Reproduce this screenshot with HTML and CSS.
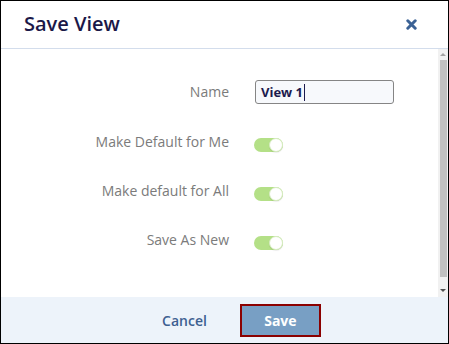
FILE: index.html
```html
<!DOCTYPE html>
<html lang="en">
<head>
    <meta charset="UTF-8">
    <meta name="viewport" content="width=device-width, initial-scale=1.0">
    <title>Save View</title>
    <link rel="stylesheet" href="styles.css">
</head>
<body>
    <div class="dialog">
        <div class="dialog-header">
            <h1 class="dialog-title">Save View</h1>
            <button class="close-btn" type="button" aria-label="Close">
                <svg width="11" height="11" viewBox="0 0 11 11">
                    <path d="M1.8 1.8 L9.2 9.2 M9.2 1.8 L1.8 9.2" stroke="#3b6295" stroke-width="3" stroke-linecap="round"/>
                </svg>
            </button>
        </div>

        <div class="dialog-body">
            <div class="form">
                <div class="field field-name">
                    <label class="field-label">Name</label>
                    <div class="text-input">View 1<span class="caret"></span></div>
                </div>
                <div class="field">
                    <label class="field-label">Make Default for Me</label>
                    <span class="toggle on"><span class="knob"></span></span>
                </div>
                <div class="field">
                    <label class="field-label">Make default for All</label>
                    <span class="toggle on"><span class="knob"></span></span>
                </div>
                <div class="field">
                    <label class="field-label">Save As New</label>
                    <span class="toggle on"><span class="knob"></span></span>
                </div>
            </div>
            <!-- fake scrollbar -->
            <div class="scrollbar">
                <span class="arrow-up"></span>
                <span class="thumb"></span>
                <span class="arrow-down"></span>
            </div>
        </div>

        <div class="dialog-footer">
            <button class="btn-link" type="button">Cancel</button>
            <button class="btn-save" type="button">Save</button>
        </div>
    </div>
</body>
</html>
```

FILE: styles.css
```css
*{
    margin: 0;
    padding: 0;
    box-sizing: border-box;
}
body{
    font-family: "Open Sans", "Liberation Sans", sans-serif;
    background-color: white;
}
.dialog{
    width: 449px;
    height: 344px;
    border: 1px solid black;
    display: flex;
    flex-direction: column;
    background-color: white;
}
.dialog-header{
    height: 48px;
    flex-shrink: 0;
    display: flex;
    align-items: center;
    padding: 0 31px 0 23px;
    border-bottom: 1px solid #d3ddec;
}
.dialog-title{
    font-size: 20px;
    font-weight: 600;
    color: #1b1848;
    line-height: 27px;
    margin-top: -2px;
}
.close-btn{
    margin-left: auto;
    border: none;
    background: none;
    width: 11px;
    height: 11px;
    display: flex;
    margin-top: -1px;
}
.dialog-body{
    flex: 1;
    display: flex;
    min-height: 0;
}
.form{
    flex: 1;
    display: flex;
    flex-direction: column;
    gap: 25px;
    padding-top: 31px;
}
.field{
    display: grid;
    grid-template-columns: 228px 1fr;
    column-gap: 25px;
    align-items: center;
    height: 24px;
}
.field-name{
    margin-bottom: 1px;
}
.field-label{
    text-align: right;
    font-size: 14px;
    line-height: 24px;
    color: #7b7b7b;
}
.text-input{
    margin-left: 1px;
    width: 139px;
    height: 24px;
    border: 1px solid #858585;
    border-radius: 3px;
    background-color: #f7f9fc;
    padding-left: 5px;
    font-size: 13px;
    font-weight: 700;
    line-height: 22px;
    color: #1c1b4e;
    display: flex;
    align-items: center;
}
.caret{
    display: inline-block;
    width: 1px;
    height: 17px;
    margin-left: 1px;
    background-color: #1c1b4e;
}
.toggle{
    position: relative;
    display: block;
    width: 29px;
    height: 14px;
    border-radius: 7px;
    background-color: #b4e087;
    margin-top: 6px;
}
.toggle .knob{
    position: absolute;
    top: 0;
    right: 0;
    width: 14px;
    height: 14px;
    border-radius: 50%;
    background-color: white;
    border: 1px solid #d6ecc0;
    box-shadow: 0 1px 1px rgba(0,0,0,0.08);
}
.scrollbar{
    width: 10px;
    flex-shrink: 0;
    background-color: #f1f1f1;
    display: flex;
    flex-direction: column;
    align-items: center;
    padding: 4px 0 5px;
}
.arrow-up{
    width: 0;
    height: 0;
    border-left: 3px solid transparent;
    border-right: 3px solid transparent;
    border-bottom: 3px solid #a3a3a3;
}
.thumb{
    width: 7px;
    flex: 1;
    margin: 4px 0 12px;
    background-color: #c1c1c1;
}
.arrow-down{
    width: 0;
    height: 0;
    border-left: 3px solid transparent;
    border-right: 3px solid transparent;
    border-top: 3px solid #505050;
}
.dialog-footer{
    height: 46px;
    flex-shrink: 0;
    background-color: #edf3fa;
    display: flex;
    align-items: center;
    justify-content: center;
    gap: 33px;
    padding-left: 34px;
}
.btn-link{
    border: none;
    background: none;
    font-family: inherit;
    font-size: 14px;
    font-weight: 600;
    color: #3d6091;
}
.btn-save{
    width: 81px;
    height: 33px;
    border: 2px solid #8b0000;
    background-color: #789fc4;
    color: white;
    font-family: inherit;
    font-size: 14px;
    font-weight: 700;
    margin-top: 1px;
}
```
